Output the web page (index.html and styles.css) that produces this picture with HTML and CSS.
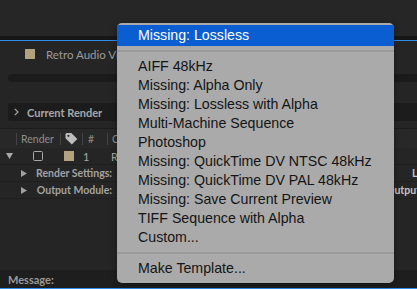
FILE: index.html
```html
<!DOCTYPE html>
<html>
<head>
<meta charset="utf-8">
<link rel="stylesheet" href="styles.css">
</head>
<body>
<div class="app">
  <div class="topbar"></div>
  <div class="topshade"></div>
  <div class="accent"></div>
  <div class="comp-row"><span class="swatch"></span><span class="comp-name">Retro Audio Visualizer</span></div>
  <div class="progress"></div>
  <div class="current-render">
    <svg class="chev" width="5" height="8" viewBox="0 0 5 8"><polyline points="0.8,0.8 4,4 0.8,7.2" fill="none" stroke="#a8a8a8" stroke-width="1.2"/></svg>
    <span>Current Render</span>
  </div>
  <div class="header">
    <div class="hcell c0"></div>
    <div class="hcell c1">Render</div>
    <div class="hcell c2">
      <svg width="13" height="12" viewBox="0 0 13 12"><path d="M0.5 1.2 V5.2 L6.8 11.5 L12.3 6 L6 -0.3 H1.7 Z" fill="#bdbdbd"/><circle cx="3.4" cy="2.8" r="1.1" fill="#2a2a2a"/></svg>
    </div>
    <div class="hcell c3">#</div>
    <div class="hcell c4">Comp Name</div>
  </div>
  <div class="row item-row">
    <svg class="tri-down" width="7" height="6" viewBox="0 0 7 6"><polygon points="0,0 7,0 3.5,6" fill="#a8a8a8"/></svg>
    <span class="check"></span>
    <span class="swatch small"></span>
    <span class="num">1</span>
    <span class="rname">Retro Audio Visualizer</span>
  </div>
  <div class="row sub-row">
    <div class="sub-label">
      <svg width="6" height="7" viewBox="0 0 6 7"><polygon points="0,0 6,3.5 0,7" fill="#a0a0a0"/></svg>
      <span>Render Settings:</span>
    </div>
    <div class="sub-value">Best Settings</div>
    <div class="sub-right">Log:</div>
  </div>
  <div class="row sub-row">
    <div class="sub-label">
      <svg width="6" height="7" viewBox="0 0 6 7"><polygon points="0,0 6,3.5 0,7" fill="#a0a0a0"/></svg>
      <span>Output Module:</span>
    </div>
    <div class="sub-value">Lossless</div>
    <div class="sub-right out">Output To:</div>
  </div>
  <div class="spacer"></div>
  <div class="message">Message:</div>
  <div class="accent"></div>
</div>

<div class="menu">
  <div class="menu-item selected">Missing: Lossless</div>
  <div class="menu-sep first"></div>
  <div class="menu-item">AIFF 48kHz</div>
  <div class="menu-item">Missing: Alpha Only</div>
  <div class="menu-item">Missing: Lossless with Alpha</div>
  <div class="menu-item">Multi-Machine Sequence</div>
  <div class="menu-item">Photoshop</div>
  <div class="menu-item">Missing: QuickTime DV NTSC 48kHz</div>
  <div class="menu-item">Missing: QuickTime DV PAL 48kHz</div>
  <div class="menu-item">Missing: Save Current Preview</div>
  <div class="menu-item">TIFF Sequence with Alpha</div>
  <div class="menu-item">Custom...</div>
  <div class="menu-sep"></div>
  <div class="menu-item">Make Template...</div>
</div>
</body>
</html>
```

FILE: styles.css
```css
html, body {
  margin: 0;
  padding: 0;
}
body {
  width: 417px;
  height: 289px;
  overflow: hidden;
  background: #252525;
  font-family: Lato, "Liberation Sans", sans-serif;
  position: relative;
}
.app {
  display: flex;
  flex-direction: column;
  height: 289px;
  width: 417px;
  overflow: hidden;
}
.topbar {
  height: 36px;
  background: #262626;
  flex-shrink: 0;
}
.topshade {
  height: 4px;
  background: #161616;
  flex-shrink: 0;
}
.accent {
  height: 1px;
  background: #2f8ded;
  flex-shrink: 0;
}
.comp-row {
  height: 26px;
  display: flex;
  align-items: center;
  padding-left: 25px;
  gap: 11px;
  flex-shrink: 0;
}
.swatch {
  width: 10px;
  height: 10px;
  background: #b3a27f;
  display: block;
  flex-shrink: 0;
}
.comp-name {
  color: #9c9c9c;
  font-size: 11.5px;
  white-space: nowrap;
}
.progress {
  margin-top: 7px;
  margin-left: 8px;
  height: 8px;
  border-radius: 4px 0 0 4px;
  background: #1b1b1b;
  flex-shrink: 0;
}
.current-render {
  margin-top: 21px;
  margin-left: 8px;
  height: 18px;
  background: #1c1c1c;
  border-radius: 3px 0 0 3px;
  display: flex;
  align-items: center;
  padding-left: 6px;
  gap: 8px;
  color: #a8a8a8;
  font-weight: bold;
  font-size: 11px;
  flex-shrink: 0;
}
.header {
  margin-top: 7px;
  height: 19px;
  border-top: 1px solid #1c1c1c;
  background: #282828;
  display: flex;
  align-items: center;
  font-size: 10.5px;
  color: #8e8e8e;
  flex-shrink: 0;
}
.hcell {
  height: 12px;
  line-height: 12px;
  display: flex;
  align-items: center;
  border-left: 1px solid #444;
  flex-shrink: 0;
  white-space: nowrap;
}
.c0 { width: 16px; border-left: none; }
.c1 { padding-left: 4px; width: 39px; }
.c2 { width: 17px; padding-left: 4px; }
.c3 { width: 19px; padding-left: 5px; }
.c4 { padding-left: 4px; }
.row {
  display: flex;
  align-items: center;
  flex-shrink: 0;
  border-bottom: 1px solid #1f1f1f;
}
.item-row {
  height: 16px;
  color: #a8a8a8;
  font-size: 11px;
}
.tri-down { margin-left: 6px; }
.check {
  margin-left: 20px;
  width: 8px;
  height: 8px;
  border: 1.5px solid #a8a8a8;
  border-radius: 1.5px;
}
.swatch.small { margin-left: 21px; }
.num { margin-left: 9px; width: 28px; }
.rname { white-space: nowrap; }
.sub-row {
  height: 16px;
  font-size: 10.5px;
  font-weight: bold;
  color: #a2a2a2;
}
.sub-label {
  width: 112px;
  padding-left: 21px;
  box-sizing: border-box;
  display: flex;
  align-items: center;
  justify-content: space-between;
  flex-shrink: 0;
  white-space: nowrap;
}
.sub-value {
  width: 160px;
  padding-left: 10px;
  font-weight: normal;
  flex-shrink: 0;
  white-space: nowrap;
}
.sub-right {
  margin-left: 130px;
  width: 60px;
  flex-shrink: 0;
  color: #c4c4c4;
  white-space: nowrap;
}
.sub-right.out { margin-left: 104px; }
.spacer { flex: 1; }
.message {
  height: 18px;
  background: #1e1e1e;
  display: flex;
  align-items: center;
  padding-left: 8px;
  color: #9a9a9a;
  font-weight: bold;
  font-size: 11px;
  flex-shrink: 0;
}

.menu {
  position: absolute;
  left: 117px;
  top: 23px;
  width: 277px;
  height: 260px;
  box-sizing: border-box;
  padding-top: 2px;
  background: #aaaaaa;
  border-radius: 5px;
  box-shadow: 0 2px 6px rgba(0,0,0,0.35);
  font-family: "Liberation Sans", Arial, sans-serif;
  font-size: 14.2px;
  color: #141414;
}
.menu-item {
  height: 19px;
  line-height: 19px;
  padding-left: 21px;
  white-space: nowrap;
}
.menu-item.selected {
  height: 21px;
  line-height: 21px;
  background: #0b5ed2;
  color: #ffffff;
}
.menu-sep {
  height: 2px;
  background: #9a9a9a;
  margin: 5px 0;
}
.menu-sep.first {
  margin: 4px 0 5px;
}
```
